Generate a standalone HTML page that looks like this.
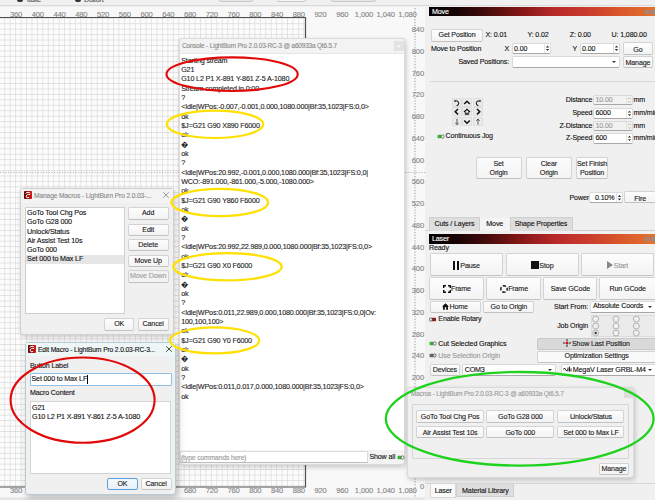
<!DOCTYPE html>
<html><head><meta charset="utf-8"><style>
*{box-sizing:border-box;margin:0;padding:0}
html,body{width:655px;height:500px;overflow:hidden;background:#f0f0f0;font-family:"Liberation Sans",sans-serif;font-size:7.1px;letter-spacing:-0.14px;color:#111;-webkit-text-stroke:0.12px}
.a{position:absolute}
.t{position:absolute;white-space:pre;line-height:9px}
.btn{position:absolute;border:1px solid #d3d3d3;border-bottom-color:#c2c2c2;border-radius:2px;background:linear-gradient(#fdfdfd,#f3f3f3);text-align:center;white-space:pre;color:#1a1a1a}
.inp{position:absolute;border:1px solid #d9d9d9;border-bottom-color:#a8a8a8;background:#fff;border-radius:2px;white-space:pre;padding-left:1.5px}
.dis{background:#f2f2f2;color:#9a9a9a}
.rl{position:absolute;color:#858585;font-size:7.6px;white-space:pre;line-height:8px}
.hdr{position:absolute;height:9px;background:linear-gradient(90deg,#000 0%,#170303 12%,#440a0a 25%,#821616 40%,#b52828 55%,#ca3a2c 70%,#d8582c 85%,#e2742e 100%);color:#fff;font-size:7.2px;line-height:10.2px;padding-left:3px;letter-spacing:-0.2px;overflow:hidden}
.tog{position:absolute;width:7px;height:4px;border-radius:2px}
.win{position:absolute;background:#f0f0f0;border:1px solid #d4d4d4;border-radius:3px;box-shadow:1px 2px 5px rgba(0,0,0,0.2)}
</style></head><body>
<div class="a" style="left:0;top:0;width:655px;height:6px;background:#f0f0f0;border-bottom:1px solid #dadada"></div>
<div class="t" style="left:27px;top:-4.3px;color:#555">Italic</div>
<div class="t" style="left:84px;top:-4.3px;color:#555">Distort</div>
<div class="a" style="left:17px;top:-2px;width:6px;height:4px;background:#333;border-radius:2px"></div>
<div class="a" style="left:75px;top:-2px;width:6px;height:4px;background:#333;border-radius:2px"></div>
<div class="a" style="left:219px;top:-3px;width:34px;height:5px;border:1px solid #c8c8c8;border-radius:2px;background:#e6e6e6"></div>
<div class="a" style="left:277px;top:-3px;width:29px;height:5px;border:1px solid #c8c8c8;border-radius:2px;background:#f4f4f4"></div>
<div class="a" style="left:331px;top:-3px;width:45px;height:5px;border:1px solid #c8c8c8;border-radius:2px;background:#e6e6e6"></div>
<div class="a" style="left:0;top:7px;width:425px;height:493px;background:#f8f8f8"></div>
<svg class="a" style="left:0;top:0" width="425" height="500">
<defs><pattern id="g" patternUnits="userSpaceOnUse" x="4.3" y="1.5" width="5.4375" height="5.4375">
<rect width="5.4375" height="5.4375" fill="#fcfcfc"/>
<path d="M0 0H5.4375M0 0V5.4375" stroke="#d9d9d9" stroke-width="1.25" fill="none"/></pattern></defs>
<rect x="0" y="17" width="305" height="470" fill="url(#g)"/>
<path d="M0 17.5H305.5V487H0" stroke="#505050" stroke-width="1.2" fill="none"/>
<path d="M415 8V500" stroke="#999" stroke-width="1" stroke-dasharray="1.2 1.6" fill="none"/>
<path d="M0 172.5H425" stroke="#a8a8a8" stroke-width="0.9" stroke-dasharray="1.1 1.6" fill="none"/>
</svg>
<div class="rl" style="left:1.00px;top:10.8px;width:30px;text-align:center">360</div>
<div class="rl" style="left:22.75px;top:10.8px;width:30px;text-align:center">400</div>
<div class="rl" style="left:44.50px;top:10.8px;width:30px;text-align:center">440</div>
<div class="rl" style="left:66.25px;top:10.8px;width:30px;text-align:center">480</div>
<div class="rl" style="left:88.00px;top:10.8px;width:30px;text-align:center">520</div>
<div class="rl" style="left:109.75px;top:10.8px;width:30px;text-align:center">560</div>
<div class="rl" style="left:131.50px;top:10.8px;width:30px;text-align:center">600</div>
<div class="rl" style="left:153.25px;top:10.8px;width:30px;text-align:center">640</div>
<div class="rl" style="left:175.00px;top:10.8px;width:30px;text-align:center">680</div>
<div class="rl" style="left:196.75px;top:10.8px;width:30px;text-align:center">720</div>
<div class="rl" style="left:218.50px;top:10.8px;width:30px;text-align:center">760</div>
<div class="rl" style="left:240.25px;top:10.8px;width:30px;text-align:center">800</div>
<div class="rl" style="left:262.00px;top:10.8px;width:30px;text-align:center">840</div>
<div class="rl" style="left:283.75px;top:10.8px;width:30px;text-align:center">880</div>
<div class="rl" style="left:305.50px;top:10.8px;width:30px;text-align:center">920</div>
<div class="rl" style="left:327.25px;top:10.8px;width:30px;text-align:center">960</div>
<div class="rl" style="left:349.00px;top:10.8px;width:30px;text-align:center">1,000</div>
<div class="rl" style="left:370.75px;top:10.8px;width:30px;text-align:center">1,040</div>
<div class="rl" style="left:392.50px;top:10.8px;width:30px;text-align:center">1,080</div>
<div class="rl" style="left:1.00px;top:487px;width:30px;text-align:center">360</div>
<div class="rl" style="left:22.75px;top:487px;width:30px;text-align:center">400</div>
<div class="rl" style="left:44.50px;top:487px;width:30px;text-align:center">440</div>
<div class="rl" style="left:66.25px;top:487px;width:30px;text-align:center">480</div>
<div class="rl" style="left:88.00px;top:487px;width:30px;text-align:center">520</div>
<div class="rl" style="left:109.75px;top:487px;width:30px;text-align:center">560</div>
<div class="rl" style="left:131.50px;top:487px;width:30px;text-align:center">600</div>
<div class="rl" style="left:153.25px;top:487px;width:30px;text-align:center">640</div>
<div class="rl" style="left:175.00px;top:487px;width:30px;text-align:center">680</div>
<div class="rl" style="left:196.75px;top:487px;width:30px;text-align:center">720</div>
<div class="rl" style="left:218.50px;top:487px;width:30px;text-align:center">760</div>
<div class="rl" style="left:240.25px;top:487px;width:30px;text-align:center">800</div>
<div class="rl" style="left:262.00px;top:487px;width:30px;text-align:center">840</div>
<div class="rl" style="left:283.75px;top:487px;width:30px;text-align:center">880</div>
<div class="rl" style="left:305.50px;top:487px;width:30px;text-align:center">920</div>
<div class="rl" style="left:327.25px;top:487px;width:30px;text-align:center">960</div>
<div class="rl" style="left:349.00px;top:487px;width:30px;text-align:center">1,000</div>
<div class="rl" style="left:370.75px;top:487px;width:30px;text-align:center">1,040</div>
<div class="rl" style="left:392.50px;top:487px;width:30px;text-align:center">1,080</div>
<div class="a" style="left:0;top:497px;width:425px;height:3px;background:linear-gradient(#eeeeee,#e2e2e2)"></div>
<div class="rl" style="left:394px;width:30px;text-align:right;top:26.00px">840</div>
<div class="rl" style="left:394px;width:30px;text-align:right;top:47.75px">800</div>
<div class="rl" style="left:394px;width:30px;text-align:right;top:69.50px">760</div>
<div class="rl" style="left:394px;width:30px;text-align:right;top:91.25px">720</div>
<div class="rl" style="left:394px;width:30px;text-align:right;top:113.00px">680</div>
<div class="rl" style="left:394px;width:30px;text-align:right;top:134.75px">640</div>
<div class="rl" style="left:394px;width:30px;text-align:right;top:156.50px">600</div>
<div class="rl" style="left:394px;width:30px;text-align:right;top:178.25px">560</div>
<div class="rl" style="left:394px;width:30px;text-align:right;top:200.00px">520</div>
<div class="rl" style="left:394px;width:30px;text-align:right;top:221.75px">480</div>
<div class="rl" style="left:394px;width:30px;text-align:right;top:243.50px">440</div>
<div class="rl" style="left:394px;width:30px;text-align:right;top:265.25px">400</div>
<div class="rl" style="left:394px;width:30px;text-align:right;top:287.00px">360</div>
<div class="rl" style="left:394px;width:30px;text-align:right;top:308.75px">320</div>
<div class="rl" style="left:394px;width:30px;text-align:right;top:330.50px">280</div>
<div class="rl" style="left:394px;width:30px;text-align:right;top:352.25px">240</div>
<div class="rl" style="left:394px;width:30px;text-align:right;top:374.00px">200</div>
<div class="rl" style="left:394px;width:30px;text-align:right;top:395.75px">160</div>
<div class="rl" style="left:394px;width:30px;text-align:right;top:417.50px">120</div>
<div class="rl" style="left:394px;width:30px;text-align:right;top:439.25px">80</div>
<div class="rl" style="left:394px;width:30px;text-align:right;top:461.00px">40</div>
<div class="rl" style="left:394px;width:30px;text-align:right;top:482.75px">0</div>
<div class="a" style="left:425px;top:7px;width:230px;height:493px;background:#f0f0f0"></div>
<div class="hdr" style="left:429px;top:7px;width:226px">Move</div>
<div class="btn" style="left:431px;top:29px;width:52.0px;height:13.0px;line-height:11.0px;">Get Position</div>
<div class="t" style="left:485.5px;top:31px;">X: 0.01</div>
<div class="t" style="left:527.5px;top:31px;">Y: 0.02</div>
<div class="t" style="left:569.8px;top:31px;">Z: 0.00</div>
<div class="t" style="left:611.6px;top:31px;">U: 1,080.00</div>
<div class="t" style="left:431px;top:44.5px;">Move to Position</div>
<div class="t" style="left:504.5px;top:45px;">X</div>
<div class="inp" style="left:511.5px;top:43.2px;width:39.7px;height:10.8px;line-height:8.8px;padding-top:0.8px">0.00</div>
<div class="a" style="left:544.2px;top:44.2px;width:6px;height:8.799999999999997px;border-left:1px solid #e4e4e4"></div>
<svg class="a" style="left:545.2px;top:44.2px" width="5" height="8.799999999999997"><path d="M0.8 3.5L2.5 1.6L4.2 3.5ZM0.8 5.1L2.5 7.0L4.2 5.1Z" fill="#333"/></svg>
<div class="t" style="left:572.5px;top:45px;">Y</div>
<div class="inp" style="left:579.5px;top:43.2px;width:40.0px;height:10.8px;line-height:8.8px;padding-top:0.8px">0.00</div>
<div class="a" style="left:612.5px;top:44.2px;width:6px;height:8.799999999999997px;border-left:1px solid #e4e4e4"></div>
<svg class="a" style="left:613.5px;top:44.2px" width="5" height="8.799999999999997"><path d="M0.8 3.5L2.5 1.6L4.2 3.5ZM0.8 5.1L2.5 7.0L4.2 5.1Z" fill="#333"/></svg>
<div class="btn" style="left:622.6px;top:42.4px;width:30.7px;height:12.4px;line-height:10.4px;padding-top:1.3px">Go</div>
<div class="t" style="left:440px;top:58px;width:69px;text-align:right">Saved Positions:</div>
<div class="inp" style="left:511.5px;top:56px;width:108.0px;height:11.8px;line-height:9.8px;"></div>
<svg class="a" style="left:610.5px;top:56px" width="6" height="11.799999999999997"><path d="M1 4.9L3 6.9L5 4.9Z" fill="#333"/></svg>
<div class="btn" style="left:622.6px;top:55.8px;width:30.7px;height:12.4px;line-height:10.4px;padding-top:1.2px">Manage</div>
<div class="a" style="left:430px;top:80.5px;width:225px;height:1px;background:#d8d8d8"></div>
<div class="a" style="left:451.9px;top:97.5px;width:10px;height:9.3px;background:#ebebeb;border:1px solid #dedede;border-radius:1px"></div>
<div class="a" style="left:462.4px;top:97.5px;width:10px;height:9.3px;background:#ebebeb;border:1px solid #dedede;border-radius:1px"></div>
<div class="a" style="left:472.9px;top:97.5px;width:10px;height:9.3px;background:#ebebeb;border:1px solid #dedede;border-radius:1px"></div>
<div class="a" style="left:451.9px;top:107.2px;width:10px;height:9.3px;background:#ebebeb;border:1px solid #dedede;border-radius:1px"></div>
<div class="a" style="left:462.4px;top:107.2px;width:10px;height:9.3px;background:#ebebeb;border:1px solid #dedede;border-radius:1px"></div>
<div class="a" style="left:472.9px;top:107.2px;width:10px;height:9.3px;background:#ebebeb;border:1px solid #dedede;border-radius:1px"></div>
<div class="a" style="left:451.9px;top:116.9px;width:10px;height:9.3px;background:#ebebeb;border:1px solid #dedede;border-radius:1px"></div>
<div class="a" style="left:462.4px;top:116.9px;width:10px;height:9.3px;background:#ebebeb;border:1px solid #dedede;border-radius:1px"></div>
<div class="a" style="left:472.9px;top:116.9px;width:10px;height:9.3px;background:#ebebeb;border:1px solid #dedede;border-radius:1px"></div>
<svg class="a" style="left:451.9px;top:97.5px" width="10" height="9.5"><path d="M3 3.2A2.4 2.4 0 1 1 4.6 7.6" stroke="#222" stroke-width="1.1" fill="none"/><path d="M1.8 2.2L3.8 2.6L3 4.4Z" fill="#222"/></svg>
<svg class="a" style="left:462.4px;top:97.5px" width="10" height="9.5"><path d="M2.2 6L5 3.2L7.8 6" stroke="#111" stroke-width="1.5" fill="none"/></svg>
<svg class="a" style="left:472.9px;top:97.5px" width="10" height="9.5"><path d="M7 3.2A2.4 2.4 0 1 0 5.4 7.6" stroke="#222" stroke-width="1.1" fill="none"/><path d="M8.2 2.2L6.2 2.6L7 4.4Z" fill="#222"/></svg>
<svg class="a" style="left:451.9px;top:107.2px" width="10" height="9.5"><path d="M6 2L3.2 4.7L6 7.4" stroke="#111" stroke-width="1.5" fill="none"/></svg>
<svg class="a" style="left:462.4px;top:107.2px" width="10" height="9.5"><path d="M2 5L5 2.3L8 5" stroke="#111" stroke-width="1.2" fill="none"/><path d="M3.3 4.6V7.6H4.5V6H5.5V7.6H6.7V4.6" stroke="#111" stroke-width="0.8" fill="none"/></svg>
<svg class="a" style="left:472.9px;top:107.2px" width="10" height="9.5"><path d="M4 2L6.8 4.7L4 7.4" stroke="#111" stroke-width="1.5" fill="none"/></svg>
<svg class="a" style="left:451.9px;top:116.9px" width="10" height="9.5"><path d="M5 1.8V7.4M3.3 5.8L5 7.6L6.7 5.8" stroke="#444" stroke-width="0.9" fill="none"/></svg>
<svg class="a" style="left:462.4px;top:116.9px" width="10" height="9.5"><path d="M2.2 3.5L5 6.3L7.8 3.5" stroke="#111" stroke-width="1.5" fill="none"/></svg>
<svg class="a" style="left:472.9px;top:116.9px" width="10" height="9.5"><path d="M5 2V7.6M3.3 3.8L5 2L6.7 3.8" stroke="#444" stroke-width="0.9" fill="none"/></svg>
<svg class="a" style="left:436.5px;top:133.5px" width="8" height="5"><rect x="0.5" y="0.8" width="4.2" height="3.4" rx="1" fill="#2fb82f"/><rect x="4.2" y="0.9" width="2.8" height="3.2" rx="1.2" fill="#fff" stroke="#444" stroke-width="0.7"/></svg>
<div class="t" style="left:445.6px;top:131.5px;">Continuous Jog</div>
<div class="t" style="left:540px;top:95.6px;width:52.3px;text-align:right">Distance</div>
<div class="inp dis" style="left:593px;top:94.6px;width:39.5px;height:10.9px;line-height:8.9px;">10.00</div>
<div class="a" style="left:625.5px;top:95.6px;width:6px;height:8.900000000000006px;border-left:1px solid #e4e4e4"></div>
<svg class="a" style="left:626.5px;top:95.6px" width="5" height="8.900000000000006"><path d="M1 3.3L2.5 1.8L4 3.3M1 5.2L2.5 6.7L4 5.2" stroke="#aaa" stroke-width="0.8" fill="none"/></svg>
<div class="t" style="left:633.5px;top:95.6px;">mm</div>
<div class="t" style="left:540px;top:108.5px;width:52.3px;text-align:right">Speed</div>
<div class="inp" style="left:593px;top:107.5px;width:39.5px;height:11.0px;line-height:9.0px;">6000</div>
<div class="a" style="left:625.5px;top:108.5px;width:6px;height:9.0px;border-left:1px solid #e4e4e4"></div>
<svg class="a" style="left:626.5px;top:108.5px" width="5" height="9.0"><path d="M0.8 3.6L2.5 1.7L4.2 3.6ZM0.8 5.2L2.5 7.1L4.2 5.2Z" fill="#333"/></svg>
<div class="t" style="left:633.5px;top:108.5px;">mm/min</div>
<div class="t" style="left:540px;top:121.6px;width:52.3px;text-align:right">Z-Distance</div>
<div class="inp dis" style="left:593px;top:120.6px;width:39.5px;height:10.9px;line-height:8.9px;">10.00</div>
<div class="a" style="left:625.5px;top:121.6px;width:6px;height:8.900000000000006px;border-left:1px solid #e4e4e4"></div>
<svg class="a" style="left:626.5px;top:121.6px" width="5" height="8.900000000000006"><path d="M1 3.3L2.5 1.8L4 3.3M1 5.2L2.5 6.7L4 5.2" stroke="#aaa" stroke-width="0.8" fill="none"/></svg>
<div class="t" style="left:633.5px;top:121.6px;">mm</div>
<div class="t" style="left:540px;top:134.0px;width:52.3px;text-align:right">Z-Speed</div>
<div class="inp" style="left:593px;top:133px;width:39.5px;height:11.0px;line-height:9.0px;">600</div>
<div class="a" style="left:625.5px;top:134px;width:6px;height:9px;border-left:1px solid #e4e4e4"></div>
<svg class="a" style="left:626.5px;top:134px" width="5" height="9"><path d="M0.8 3.6L2.5 1.7L4.2 3.6ZM0.8 5.2L2.5 7.1L4.2 5.2Z" fill="#333"/></svg>
<div class="t" style="left:633.5px;top:134px;">mm/min</div>
<div class="btn" style="left:475.5px;top:157.1px;width:46.1px;height:21.7px;line-height:19.7px;line-height:9px;padding-top:1.8px">Set<br>Origin</div>
<div class="btn" style="left:526px;top:157.1px;width:45.6px;height:21.7px;line-height:19.7px;line-height:9px;padding-top:1.8px">Clear<br>Origin</div>
<div class="btn" style="left:576px;top:157.1px;width:32.2px;height:21.7px;line-height:19.7px;line-height:9px;padding-top:1.8px">Set Finish<br>Position</div>
<div class="t" style="left:569.5px;top:193.5px;">Power</div>
<div class="inp" style="left:589px;top:191.5px;width:34.0px;height:11.7px;line-height:9.7px;padding-left:5px;padding-top:1.2px">0.10%</div>
<div class="a" style="left:616px;top:192.5px;width:6px;height:9.699999999999989px;border-left:1px solid #e4e4e4"></div>
<svg class="a" style="left:617px;top:192.5px" width="5" height="9.699999999999989"><path d="M0.8 3.9L2.5 2.0L4.2 3.9ZM0.8 5.5L2.5 7.4L4.2 5.5Z" fill="#333"/></svg>
<div class="btn" style="left:624.3px;top:191.3px;width:31.7px;height:12.2px;line-height:10.2px;padding-top:1.4px">Fire</div>
<div class="a" style="left:425px;top:230px;width:230px;height:1px;background:#d0d0d0"></div>
<div class="a" style="left:429px;top:217px;width:51px;height:13.5px;background:#dedede;border:1px solid #cfcfcf;border-bottom:none;text-align:center;line-height:12px;white-space:pre">Cuts / Layers</div>
<div class="a" style="left:480px;top:218px;width:29.5px;height:13px;background:#f4f4f4;text-align:center;line-height:13px;white-space:pre">Move</div>
<div class="a" style="left:509.5px;top:217px;width:63px;height:13.5px;background:#dedede;border:1px solid #cfcfcf;border-bottom:none;text-align:center;line-height:12px;white-space:pre">Shape Properties</div>
<div class="hdr" style="left:429px;top:234px;width:226px;height:9.5px">Laser</div>
<div class="a" style="left:645px;top:9.5px;width:4px;height:4px;border:0.8px solid #8a8a9a;background:#c08060"></div>
<div class="a" style="left:650.5px;top:9.5px;width:4px;height:4px;border:0.8px solid #8a8a9a;background:#c08060"></div>
<div class="a" style="left:645px;top:236.8px;width:4px;height:4px;border:0.8px solid #8a8a9a;background:#c08060"></div>
<div class="a" style="left:650.5px;top:236.8px;width:4px;height:4px;border:0.8px solid #8a8a9a;background:#c08060"></div>
<div class="t" style="left:429px;top:244px;">Ready</div>
<div class="btn" style="left:429.5px;top:253px;width:73.8px;height:22.8px;line-height:20.8px;font-size:7.2px;padding-top:1.8px"><span style="display:inline-block;height:8.5px;border-left:2.4px solid #111;border-right:2.4px solid #111;width:6.6px;vertical-align:-1.8px;margin-right:0.8px"></span>Pause</div>
<div class="btn" style="left:505.7px;top:253px;width:72.9px;height:22.8px;line-height:20.8px;font-size:7.2px;padding-top:1.8px"><span style="display:inline-block;width:8px;height:8px;background:#111;vertical-align:-1.5px;margin-right:0.5px"></span>Stop</div>
<div class="btn" style="left:581px;top:253px;width:73.0px;height:22.8px;line-height:20.8px;font-size:7.2px;color:#999;padding-top:1.8px"><span style="display:inline-block;width:0;height:0;border-left:6px solid #888;border-top:4px solid transparent;border-bottom:4px solid transparent;vertical-align:-1.5px;margin-right:1px"></span>Start</div>
<div class="btn" style="left:429.2px;top:277px;width:55.0px;height:22.8px;line-height:20.8px;padding-top:1.4px"><svg style="vertical-align:-1.6px;margin-right:0.3px" width="8" height="8"><path d="M0.7 3V0.7H3M5 0.7H7.3V3M7.3 5V7.3H5M3 7.3H0.7V5" stroke="#111" stroke-width="1.4" fill="none"/></svg>Frame</div>
<div class="btn" style="left:486.4px;top:277px;width:55.0px;height:22.8px;line-height:20.8px;padding-top:1.4px"><svg style="vertical-align:-1.6px;margin-right:0.3px" width="8" height="8"><circle cx="4" cy="4" r="3.2" stroke="#111" stroke-width="1.4" fill="none" stroke-dasharray="3.4 1.63" stroke-dashoffset="1.7"/></svg>Frame</div>
<div class="btn" style="left:543.3px;top:277px;width:54.2px;height:22.8px;line-height:20.8px;padding-top:1.4px">Save GCode</div>
<div class="btn" style="left:599.4px;top:277px;width:56.6px;height:22.8px;line-height:20.8px;padding-top:1.4px">Run GCode</div>
<div class="btn" style="left:429.5px;top:301.2px;width:51.0px;height:11.6px;line-height:9.6px;padding-top:0.8px"><svg style="vertical-align:-1.2px;margin-right:0.5px" width="7" height="7"><path d="M3.5 0.3L7 3.4H6V6.8H1V3.4H0Z" fill="#111"/><rect x="2.8" y="4.2" width="1.4" height="2.6" fill="#fff"/></svg>Home</div>
<div class="btn" style="left:483.4px;top:301.2px;width:50.9px;height:11.6px;line-height:9.6px;padding-top:0.8px">Go to Origin</div>
<div class="t" style="left:540px;top:302.5px;width:48px;text-align:right">Start From:</div>
<div class="inp" style="left:590.4px;top:301.2px;width:65.6px;height:11.8px;line-height:9.8px;">Absolute Coords</div>
<svg class="a" style="left:647px;top:301.2px" width="6" height="11.800000000000011"><path d="M1 4.9L3 6.9L5 4.9Z" fill="#333"/></svg>
<svg class="a" style="left:429px;top:316.5px" width="8" height="5"><rect x="2.8" y="0.8" width="4.2" height="3.4" rx="0.6" fill="#8b1a1a"/><rect x="0.4" y="0.9" width="2.8" height="3.2" rx="1.2" fill="#eee" stroke="#444" stroke-width="0.7"/></svg>
<div class="t" style="left:438.3px;top:314.8px;">Enable Rotary</div>
<div class="t" style="left:557.2px;top:321.5px;">Job Origin</div>
<div class="a" style="left:591.2px;top:314.8px;width:64px;height:22.2px;background:#ebebeb;border:1px solid #dcdcdc;border-right:none"></div>
<svg class="a" style="left:591px;top:314px" width="64" height="24"><circle cx="4.70" cy="5.10" r="3" stroke="#9a9a9a" stroke-width="0.7" fill="#efefef"/><circle cx="25.00" cy="5.10" r="3" stroke="#9a9a9a" stroke-width="0.7" fill="#efefef"/><circle cx="45.30" cy="5.10" r="3" stroke="#9a9a9a" stroke-width="0.7" fill="#efefef"/><circle cx="4.70" cy="12.05" r="3" stroke="#9a9a9a" stroke-width="0.7" fill="#efefef"/><circle cx="25.00" cy="12.05" r="3" stroke="#9a9a9a" stroke-width="0.7" fill="#efefef"/><circle cx="45.30" cy="12.05" r="3" stroke="#9a9a9a" stroke-width="0.7" fill="#efefef"/><circle cx="4.70" cy="19.00" r="3" stroke="#9a9a9a" stroke-width="0.7" fill="#efefef"/><circle cx="4.70" cy="19.00" r="1.2" fill="#333"/><circle cx="25.00" cy="19.00" r="3" stroke="#9a9a9a" stroke-width="0.7" fill="#efefef"/><circle cx="45.30" cy="19.00" r="3" stroke="#9a9a9a" stroke-width="0.7" fill="#efefef"/></svg>
<svg class="a" style="left:429px;top:340.7px" width="8" height="5"><rect x="0.5" y="0.8" width="4.2" height="3.4" rx="1" fill="#2fb82f"/><rect x="4.2" y="0.9" width="2.8" height="3.2" rx="1.2" fill="#fff" stroke="#444" stroke-width="0.7"/></svg>
<div class="t" style="left:438.3px;top:339.7px;">Cut Selected Graphics</div>
<svg class="a" style="left:429px;top:352.8px" width="8" height="5"><rect x="0.5" y="0.8" width="4.2" height="3.4" rx="1" fill="#666"/><rect x="4.2" y="0.9" width="2.8" height="3.2" rx="1.2" fill="#ddd" stroke="#444" stroke-width="0.7"/></svg>
<div class="t" style="left:438.3px;top:351.5px;color:#9a9a9a">Use Selection Origin</div>
<div class="btn" style="left:537.3px;top:338.2px;width:118.7px;height:11.7px;line-height:9.7px;background:#d9d9d9;border-color:#c8c8c8;line-height:10.6px"><svg style="vertical-align:-1.3px;margin-right:0.5px" width="8" height="8"><path d="M4 0V2.5M4 5.5V8M0 4H2.5M5.5 4H8" stroke="#111" stroke-width="0.9"/><circle cx="4" cy="4" r="1.2" fill="#e00"/></svg>Show Last Position</div>
<div class="btn" style="left:537.3px;top:351px;width:118.7px;height:11.5px;line-height:9.5px;background:#f9f9f9">Optimization Settings</div>
<div class="btn" style="left:429.5px;top:363.5px;width:30.8px;height:12.5px;line-height:10.5px;">Devices</div>
<div class="inp" style="left:462.2px;top:363.5px;width:93.8px;height:12.0px;line-height:10.0px;">COM3</div>
<svg class="a" style="left:547px;top:363.5px" width="6" height="12.0"><path d="M1 5.0L3 7.0L5 5.0Z" fill="#333"/></svg>
<div class="inp" style="left:560.5px;top:363.5px;width:95.5px;height:12.0px;line-height:10.0px;"><svg style="vertical-align:-0.5px;margin-right:0.8px" width="9" height="6"><path d="M0.5 3.5Q1.5 0.5 2.5 3.5T4.5 3.5" stroke="#111" stroke-width="1" fill="none"/><path d="M5 5.5V1.5M6.5 5.5V0.5M8 5.5V2.5" stroke="#111" stroke-width="0.9"/></svg>MegaV Laser GRBL-M4</div>
<svg class="a" style="left:647px;top:363.5px" width="6" height="12.0"><path d="M1 5.0L3 7.0L5 5.0Z" fill="#333"/></svg>
<div class="a" style="left:425px;top:482.5px;width:230px;height:1px;background:#d8d8d8"></div>
<div class="a" style="left:430px;top:483.5px;width:26.4px;height:14.5px;background:#fafafa;border:1px solid #d8d8d8;border-top:none;text-align:center;line-height:14.5px">Laser</div>
<div class="a" style="left:456.4px;top:483.5px;width:58px;height:13.7px;background:#dedede;border:1px solid #cfcfcf;border-top:none;text-align:center;line-height:14px;white-space:pre">Material Library</div>
<div class="win" style="left:179px;top:38px;width:226px;height:426.5px;background:#f3f3f3;border-color:#dcdcdc"></div>
<div class="t" style="left:182px;top:40.5px;font-size:6.4px;color:#8a8a8a;line-height:9px">Console - LightBurn Pro 2.0.03-RC-3 @ a60933a Qt6.5.7</div>
<div class="a" style="left:394.4px;top:41.4px;width:9.8px;height:9.4px;background:#e3e3e3"></div>
<div class="t" style="left:397px;top:41.5px;font-size:6px;color:#fff">&#215;</div>
<div class="a" style="left:180px;top:53px;width:224px;height:397px;background:#fff;border-top:1px solid #e6e6e6"></div>
<div class="a" style="left:181.2px;top:55.8px;white-space:pre;font-size:7.2px;letter-spacing:-0.17px;line-height:9.33px;color:#1e1e1e">Starting stream
G21
G10 L2 P1 X-891 Y-861 Z-5 A-1080
Stream completed in 0:00
?
&lt;Idle|WPos:-0.007,-0.001,0.000,1080.000|Bf:35,1023|FS:0,0&gt;
ok
$J=G21 G90 X890 F6000
ok
�
ok
?
&lt;Idle|WPos:20.992,-0.001,0.000,1080.000|Bf:35,1023|FS:0,0|
WCO:-891.000,-861.000,-5.000,-1080.000&gt;
ok
$J=G21 G90 Y860 F6000
ok
�
ok
?
&lt;Idle|WPos:20.992,22.989,0.000,1080.000|Bf:35,1023|FS:0,0&gt;
ok
$J=G21 G90 X0 F6000
ok
�
ok
?
&lt;Idle|WPos:0.011,22.989,0.000,1080.000|Bf:35,1023|FS:0,0|Ov:
100,100,100&gt;
ok
$J=G21 G90 Y0 F6000
ok
�
ok
?
&lt;Idle|WPos:0.011,0.017,0.000,1080.000|Bf:35,1023|FS:0,0&gt;
ok</div>
<div class="a" style="left:180px;top:451.2px;width:188px;height:12px;background:#fff;border:1px solid #dcdcdc;border-bottom-color:#bdbdbd"></div>
<div class="t" style="left:181px;top:453px;color:#9a9a9a;font-size:6.8px">(type commands here)</div>
<div class="t" style="left:369.4px;top:453px;">Show all</div>
<svg class="a" style="left:397px;top:455.3px" width="8" height="5"><rect x="0.5" y="0.8" width="4.2" height="3.4" rx="1" fill="#2fb82f"/><rect x="4.2" y="0.9" width="2.8" height="3.2" rx="1.2" fill="#fff" stroke="#444" stroke-width="0.7"/></svg>
<div class="win" style="left:20.4px;top:188px;width:153.4px;height:146.6px;background:#f0f0f0;border-color:#d0d0d0"></div>
<div class="a" style="left:21.4px;top:189px;width:151.4px;height:14px;background:#f3f3f3"></div>
<svg class="a" style="left:23.5px;top:191px" width="8" height="8"><defs><linearGradient id="lb191" x1="0" x2="1"><stop offset="0" stop-color="#5a0a0a"/><stop offset="1" stop-color="#e01818"/></linearGradient></defs><rect width="8" height="8" rx="0.8" fill="url(#lb191)"/><path d="M1.6 2.4C3 1 5.2 1 6.2 2.2M6 3.6C4.4 3 2.4 3.6 2.2 5.2C2 6.6 3.6 7.2 5 6.4" stroke="#fff" stroke-width="1" fill="none"/></svg>
<div class="t" style="left:34px;top:190.5px;color:#8a8a8a;font-size:6.7px">Manage Macros - LightBurn Pro 2.0.03-...</div>
<svg class="a" style="left:162px;top:191px" width="8" height="8"><path d="M1.2 1.2L6.8 6.8M6.8 1.2L1.2 6.8" stroke="#8a8a8a" stroke-width="0.8"/></svg>
<div class="a" style="left:25.2px;top:207.2px;width:99.6px;height:107.2px;background:#fff;border:1px solid #cfcfcf"></div>
<div class="a" style="left:26.2px;top:254.5px;width:97.6px;height:9.2px;background:#e6e6e6"></div>
<div class="a" style="left:27px;top:208px;white-space:pre;font-size:7.2px;letter-spacing:-0.15px;line-height:9.3px;color:#111">GoTo Tool Chg Pos
GoTo G28 000
Unlock/Status
Air Assist Test 10s
GoTo 000
Set 000 to Max LF</div>
<div class="btn" style="left:127.6px;top:207.4px;width:41.0px;height:12.2px;line-height:10.2px;">Add</div>
<div class="btn" style="left:127.5px;top:223.5px;width:41.3px;height:12.3px;line-height:10.3px;">Edit</div>
<div class="btn" style="left:127.5px;top:239px;width:41.3px;height:12.3px;line-height:10.3px;">Delete</div>
<div class="btn" style="left:127.5px;top:254.6px;width:41.3px;height:12.4px;line-height:10.4px;">Move Up</div>
<div class="btn" style="left:127.5px;top:270px;width:41.3px;height:12.5px;line-height:10.5px;color:#a0a0a0;background:#f2f2f2">Move Down</div>
<div class="btn" style="left:103.8px;top:318px;width:30.7px;height:12.5px;line-height:10.5px;">OK</div>
<div class="btn" style="left:137.6px;top:318px;width:31.2px;height:12.5px;line-height:10.5px;">Cancel</div>
<div class="win" style="left:24.9px;top:341.5px;width:151.6px;height:153px;background:#f0f0f0;border-color:#b4ccd2;box-shadow:2px 3px 7px rgba(0,0,0,0.25)"></div>
<div class="a" style="left:25.9px;top:342.5px;width:149.6px;height:13.5px;background:#eef6f6"></div>
<svg class="a" style="left:28px;top:345px" width="8" height="8"><defs><linearGradient id="lb345" x1="0" x2="1"><stop offset="0" stop-color="#5a0a0a"/><stop offset="1" stop-color="#e01818"/></linearGradient></defs><rect width="8" height="8" rx="0.8" fill="url(#lb345)"/><path d="M1.6 2.4C3 1 5.2 1 6.2 2.2M6 3.6C4.4 3 2.4 3.6 2.2 5.2C2 6.6 3.6 7.2 5 6.4" stroke="#fff" stroke-width="1" fill="none"/></svg>
<div class="t" style="left:38px;top:344.5px;color:#111;font-size:6.7px">Edit Macro - LightBurn Pro 2.0.03-RC-3...</div>
<svg class="a" style="left:165px;top:345px" width="8" height="8"><path d="M1.2 1.2L6.8 6.8M6.8 1.2L1.2 6.8" stroke="#222" stroke-width="0.8"/></svg>
<div class="t" style="left:30px;top:361.5px;">Button Label</div>
<div class="a" style="left:29.5px;top:373.3px;width:142px;height:12.4px;background:#fff;border:1px solid #90c0e8;border-radius:1px"></div>
<div class="t" style="left:31.5px;top:375px;">Set 000 to Max LF</div>
<div class="a" style="left:87.4px;top:375px;width:1px;height:9px;background:#000"></div>
<div class="t" style="left:30px;top:388.5px;">Macro Content</div>
<div class="a" style="left:29.5px;top:400.5px;width:141.5px;height:73.5px;background:#fff;border:1px solid #d4d4d4"></div>
<div class="a" style="left:32px;top:402.5px;white-space:pre;font-size:7.2px;letter-spacing:-0.17px;line-height:9.3px;color:#111">G21
G10 L2 P1 X-891 Y-861 Z-5 A-1080</div>
<div class="btn" style="left:106.8px;top:477.6px;width:31.2px;height:12.6px;line-height:10.6px;border:1px solid #5aa0e0;background:linear-gradient(#f6fafd,#e8f0f8)">OK</div>
<div class="btn" style="left:140.7px;top:477.6px;width:31.0px;height:12.6px;line-height:10.6px;">Cancel</div>
<div class="win" style="left:407.2px;top:387.2px;width:227px;height:91.2px;background:#f0f0f0;border-color:#dadada"></div>
<div class="t" style="left:411px;top:389px;color:#9a9a9a;font-size:6.4px">Macros - LightBurn Pro 2.0.03-RC-3 @ a60933a Qt6.5.7</div>
<div class="a" style="left:623.8px;top:388.2px;width:10px;height:9.8px;background:#dcdcdc"></div>
<div class="a" style="left:412.4px;top:404px;width:217px;height:55px;border:1px solid #d6d6d6;border-radius:1px"></div>
<div class="btn" style="left:416.3px;top:410.2px;width:67.7px;height:12.6px;line-height:10.6px;padding-top:1px">GoTo Tool Chg Pos</div>
<div class="btn" style="left:486.3px;top:410.2px;width:68.0px;height:12.6px;line-height:10.6px;padding-top:1px">GoTo G28 000</div>
<div class="btn" style="left:557.4px;top:410.2px;width:67.1px;height:12.6px;line-height:10.6px;padding-top:1px">Unlock/Status</div>
<div class="btn" style="left:416.3px;top:425.6px;width:67.7px;height:12.7px;line-height:10.7px;padding-top:1px">Air Assist Test 10s</div>
<div class="btn" style="left:486.3px;top:425.6px;width:68.0px;height:12.7px;line-height:10.7px;padding-top:1px">GoTo 000</div>
<div class="btn" style="left:557.4px;top:425.6px;width:67.1px;height:12.7px;line-height:10.7px;padding-top:1px">Set 000 to Max LF</div>
<div class="btn" style="left:598.6px;top:462.7px;width:30.7px;height:12.5px;line-height:10.5px;padding-top:0.8px">Manage</div>
<svg class="a" style="left:0;top:0" width="655" height="500"><ellipse cx="232.1" cy="74.2" rx="65.6" ry="16.8" stroke="#e20808" stroke-width="2.1" fill="none"/><ellipse cx="82.6" cy="400.1" rx="72" ry="42.6" stroke="#e20808" stroke-width="2.1" fill="none"/><ellipse cx="215" cy="124.3" rx="48.2" ry="13.7" stroke="#ffe000" stroke-width="2.2" fill="none"/><ellipse cx="219.8" cy="202.5" rx="48.3" ry="13.6" stroke="#ffe000" stroke-width="2.2" fill="none"/><ellipse cx="227.5" cy="266.8" rx="54.2" ry="13.6" stroke="#ffe000" stroke-width="2.2" fill="none"/><ellipse cx="214.6" cy="340.4" rx="44.6" ry="13" stroke="#ffe000" stroke-width="2.2" fill="none"/><ellipse cx="519.7" cy="418.8" rx="133.9" ry="46.8" stroke="#1ed21e" stroke-width="2.3" fill="none"/></svg>
</body></html>
